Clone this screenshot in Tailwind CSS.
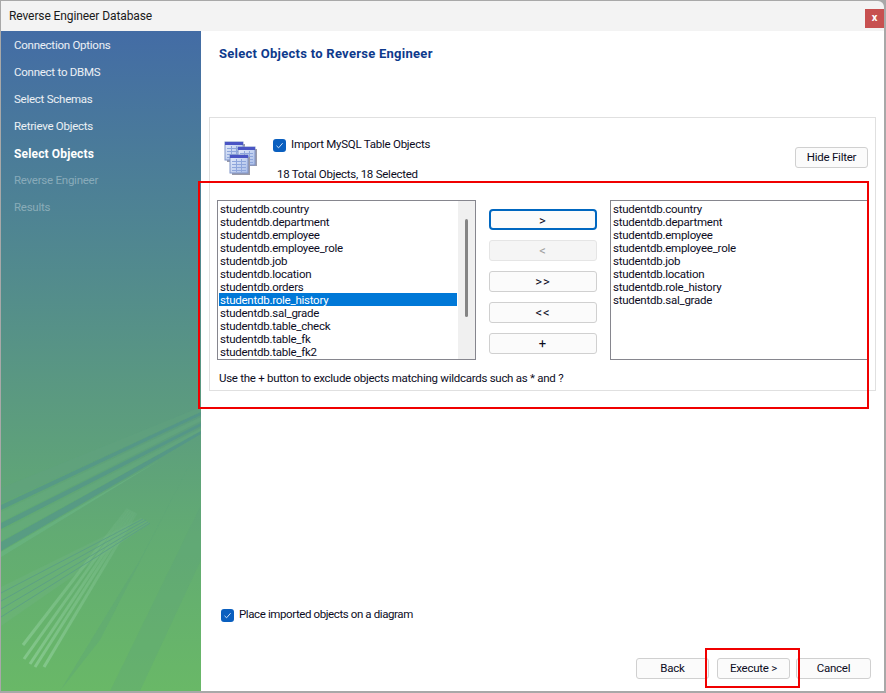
<!DOCTYPE html>
<html lang="en">
<head>
    <meta charset="UTF-8">
    <title>Reverse Engineer Database</title>
    <script src="https://cdn.jsdelivr.net/npm/@tailwindcss/browser@4"></script>
</head>
<body class="bg-[#a8a8a8] font-['Roboto',sans-serif] text-[11.5px] tracking-[-0.25px] text-[#0c0c1e] overflow-hidden">
    <div class="relative w-[886px] h-[693px] pt-px pl-px pr-[2px] pb-[2px] overflow-hidden">
        <!-- Title bar -->
        <div class="h-[30px] bg-[#f3f3f3] flex items-center justify-between pl-2 rounded-tr-[6px]">
            <span class="text-[12px] tracking-[-0.1px] text-[#1a1a1a]">Reverse Engineer Database</span>
            <div class="w-[19px] h-[19px] mt-[4px] bg-[#c75050] text-white text-[11px] font-bold flex items-center justify-center">x</div>
        </div>

        <div class="flex h-[660px] bg-white">
            <!-- Sidebar -->
            <div class="relative w-[200px] bg-[linear-gradient(180deg,#436ca5_0%,#4f8592_30%,#5b9a80_56%,#62ab73_76%,#69b867_100%)] overflow-hidden">
                <svg class="absolute left-0 top-0" width="200" height="660" viewBox="1 31 200 660" fill="none">
                    <defs>
                        <filter id="soft"><feGaussianBlur stdDeviation="0.5"/></filter>
                        <linearGradient id="fade" gradientUnits="userSpaceOnUse" x1="30" y1="660" x2="132" y2="510">
                            <stop offset="0" stop-color="#8ccc95" stop-opacity="0.75"/>
                            <stop offset="0.6" stop-color="#7cc08a" stop-opacity="0.55"/>
                            <stop offset="1" stop-color="#6fb385" stop-opacity="0.25"/>
                        </linearGradient>
                    </defs>
                    <g filter="url(#soft)">
                        <path d="M100 640 L192 460 L140 560 L60 691 Z" fill="#5a9f7c" opacity="0.3"/>
                        <path d="M110 691 L201 505 L201 560 L140 691 Z" fill="#5a9f7c" opacity="0.25"/>
                        <path d="M1 488 L201 407 L201 412 L1 503 Z" fill="#5fa17f" opacity="0.5"/>
                        <path d="M1 505 L201 412 L201 415 L1 510 Z" fill="#4f8f90" opacity="0.55"/>
                        <path d="M1 512 L201 417 L201 421 L1 522 Z" fill="#66ad7f" opacity="0.4"/>
                        <path d="M1 523 L201 423 L201 426 L1 529 Z" fill="#4f8f90" opacity="0.55"/>
                        <path d="M1 531 L201 428 L201 431 L1 541 Z" fill="#66ad7f" opacity="0.4"/>
                        <path d="M1 542 L201 431 L201 434 L1 551 Z" fill="#4f8f90" opacity="0.55"/>
                        <path d="M1 552 L160 460 L1 557 Z" fill="#6ab684" opacity="0.6"/>
                        <path d="M1 587 L141 518 L150 523 L1 626 Z" fill="#6fb385" opacity="0.3"/>
                        <g stroke="url(#fade)" stroke-width="3">
                            <path d="M23 645 L128 509"/>
                            <path d="M24 659 L130 510"/>
                            <path d="M30 664 L132 511"/>
                            <path d="M35 667 L134 512"/>
                            <path d="M44 667 L136 513"/>
                        </g>
                    </g>
                    <g stroke="#5a9d87" stroke-width="1" opacity="0.8">
                        <path d="M1 593 L143 519"/>
                        <path d="M1 601 L146 520"/>
                        <path d="M1 609 L148 522"/>
                        <path d="M1 617 L150 523"/>
                    </g>
                </svg>
                <ul class="relative flex flex-col pt-px pl-[13px] text-white/90">
                    <li class="h-[27px] flex items-center">Connection Options</li>
                    <li class="h-[27px] flex items-center">Connect to DBMS</li>
                    <li class="h-[27px] flex items-center">Select Schemas</li>
                    <li class="h-[27px] flex items-center">Retrieve Objects</li>
                    <li class="h-[27px] flex items-center text-[12px] tracking-[0.15px] font-bold text-white">Select Objects</li>
                    <li class="h-[27px] flex items-center text-white/35">Reverse Engineer</li>
                    <li class="h-[27px] flex items-center text-white/35">Results</li>
                </ul>
            </div>

            <!-- Main -->
            <div class="relative flex-1 flex flex-col pl-[8px] pr-[8px]">
                <h1 class="h-[86px] pt-[14px] pl-[10px] text-[13px] tracking-[0.27px] font-bold text-[#0e3a8c] leading-[18px]">Select Objects to Reverse Engineer</h1>

                <div class="h-[274px] border border-[#e0e0e0] flex flex-col pl-[7px] pr-[7px]">
                    <div class="h-[82px] flex relative">
                        <svg class="absolute left-[7px] top-[23px]" width="34" height="34" viewBox="0 0 34 34">
                            <defs>
                                <linearGradient id="cell" x1="0" y1="0" x2="1" y2="1">
                                    <stop offset="0" stop-color="#e6edfb"/>
                                    <stop offset="1" stop-color="#a9bde8"/>
                                </linearGradient>
                            </defs>
                            <rect x="3" y="3" width="18" height="18" fill="#9a9aa8"/>
                            <rect x="1" y="1" width="18" height="18" fill="url(#cell)" stroke="#7f93c8"/>
                            <rect x="1" y="1" width="18" height="3" fill="#4a55c4"/>
                            <path d="M3 7.500h14M3 10.500h14M3 13.500h14M3 16.500h14M7.500 5v13M12.500 5v13" stroke="#8ea6dc"/>
                            <rect x="16" y="8" width="17" height="17" fill="#9a9aa8"/>
                            <rect x="14" y="6" width="17" height="18" fill="url(#cell)" stroke="#7f93c8"/>
                            <rect x="14" y="6" width="17" height="3" fill="#4a55c4"/>
                            <path d="M16 12.500h13M16 15.500h13M16 18.500h13M16 21.500h13M20.500 10v13M25.500 10v13" stroke="#8ea6dc"/>
                            <rect x="8" y="16" width="18" height="18" fill="#9a9aa8"/>
                            <rect x="6" y="14" width="18" height="18" fill="url(#cell)" stroke="#7f93c8"/>
                            <rect x="6" y="14" width="18" height="3" fill="#4a55c4"/>
                            <path d="M8 20.500h14M8 23.500h14M8 26.500h14M8 29.500h14M12.500 18v13M17.500 18v13" stroke="#8ea6dc"/>
                        </svg>
                        <div class="pl-[56px] pt-[20px] flex flex-col">
                            <label class="flex items-center gap-[5px] h-[14px]">
                                <span class="w-[13px] h-[13px] rounded-[3px] bg-[#0a5fbf] flex items-center justify-center">
                                    <svg width="9" height="9" viewBox="0 0 9 9" fill="none"><path d="M1.500 4.800 L3.600 6.800 L7.600 2.200" stroke="#cfe2f7" stroke-width="1"/></svg>
                                </span>
                                Import MySQL Table Objects
                            </label>
                            <span class="mt-[15px] ml-[4px] h-[14px] leading-[14px]">18 Total Objects, 18 Selected</span>
                        </div>
                        <button class="absolute right-[0px] top-[29px] w-[73px] h-[21px] bg-[#fbfbfb] border border-[#d0d0d0] rounded-[3px]">Hide Filter</button>
                    </div>

                    <div class="flex">
                        <!-- Source list -->
                        <div class="relative w-[259px] h-[160px] border border-[#86868e] overflow-hidden">
                            <ul class="pt-[1px] pl-px w-[239px]">
                                <li class="h-[13px] leading-[14px] pl-[1px]">studentdb.country</li>
                                <li class="h-[13px] leading-[14px] pl-[1px]">studentdb.department</li>
                                <li class="h-[13px] leading-[14px] pl-[1px]">studentdb.employee</li>
                                <li class="h-[13px] leading-[14px] pl-[1px]">studentdb.employee_role</li>
                                <li class="h-[13px] leading-[14px] pl-[1px]">studentdb.job</li>
                                <li class="h-[13px] leading-[14px] pl-[1px]">studentdb.location</li>
                                <li class="h-[13px] leading-[14px] pl-[1px]">studentdb.orders</li>
                                <li class="h-[13px] leading-[14px] pl-[1px] bg-[#0078d7] text-white">studentdb.role_history</li>
                                <li class="h-[13px] leading-[14px] pl-[1px]">studentdb.sal_grade</li>
                                <li class="h-[13px] leading-[14px] pl-[1px]">studentdb.table_check</li>
                                <li class="h-[13px] leading-[14px] pl-[1px]">studentdb.table_fk</li>
                                <li class="h-[13px] leading-[14px] pl-[1px]">studentdb.table_fk2</li>
                            </ul>
                            <div class="absolute right-0 top-0 bottom-0 w-[17px] bg-[#f0f0f0]">
                                <div class="absolute left-[7px] top-[18px] w-[3px] h-[98px] bg-[#858585] rounded-[2px]"></div>
                            </div>
                        </div>

                        <!-- Move buttons -->
                        <div class="w-[108px] ml-[13px] pt-[9px] flex flex-col gap-[10px] text-[13px] tracking-[1px]">
                            <button class="h-[21px] bg-[#fbfbfb] border-2 border-[#0067c0] rounded-[4px]">&gt;</button>
                            <button class="h-[21px] bg-[#f5f5f5] border border-[#e5e5e5] rounded-[3px] text-[#a0a0a0]">&lt;</button>
                            <button class="h-[21px] bg-[#fbfbfb] border border-[#d0d0d0] rounded-[3px]">&gt;&gt;</button>
                            <button class="h-[21px] bg-[#fbfbfb] border border-[#d0d0d0] rounded-[3px]">&lt;&lt;</button>
                            <button class="h-[21px] bg-[#fbfbfb] border border-[#d0d0d0] rounded-[3px]">+</button>
                        </div>

                        <!-- Selected list -->
                        <div class="w-[258px] h-[160px] ml-[13px] border border-[#86868e] overflow-hidden">
                            <ul class="pt-[1px] pl-[2px]">
                                <li class="h-[13px] leading-[14px]">studentdb.country</li>
                                <li class="h-[13px] leading-[14px]">studentdb.department</li>
                                <li class="h-[13px] leading-[14px]">studentdb.employee</li>
                                <li class="h-[13px] leading-[14px]">studentdb.employee_role</li>
                                <li class="h-[13px] leading-[14px]">studentdb.job</li>
                                <li class="h-[13px] leading-[14px]">studentdb.location</li>
                                <li class="h-[13px] leading-[14px]">studentdb.role_history</li>
                                <li class="h-[13px] leading-[14px]">studentdb.sal_grade</li>
                            </ul>
                        </div>
                    </div>

                    <p class="mt-[11px] pl-[2px] leading-[14px] tracking-[-0.27px]">Use the + button to exclude objects matching wildcards such as * and ?</p>
                </div>

                <label class="mt-[217px] ml-[12px] flex items-center gap-[5px] h-[14px] tracking-[-0.4px]">
                    <span class="w-[13px] h-[13px] rounded-[3px] bg-[#0a5fbf] flex items-center justify-center">
                        <svg width="9" height="9" viewBox="0 0 9 9" fill="none"><path d="M1.500 4.800 L3.600 6.800 L7.600 2.200" stroke="#cfe2f7" stroke-width="1"/></svg>
                    </span>
                    Place imported objects on a diagram
                </label>

                <div class="mt-[36px] flex justify-end pr-[5px]">
                    <button class="w-[73px] h-[21px] bg-[#fbfbfb] border border-[#d0d0d0] rounded-[3px]">Back</button>
                    <button class="w-[73px] h-[21px] ml-[8px] bg-[#fbfbfb] border border-[#d0d0d0] rounded-[3px]">Execute &gt;</button>
                    <button class="w-[75px] h-[21px] ml-[6px] bg-[#fbfbfb] border border-[#d0d0d0] rounded-[3px]">Cancel</button>
                </div>
            </div>
        </div>

        <!-- Annotation rectangles over the dialog -->
        <div class="absolute left-[198px] top-[181px] w-[671px] h-[228px] border-2 border-[#f00000]"></div>
        <div class="absolute left-[705px] top-[648px] w-[95px] h-[40px] border-2 border-[#f00000]"></div>
    </div>
</body>
</html>
